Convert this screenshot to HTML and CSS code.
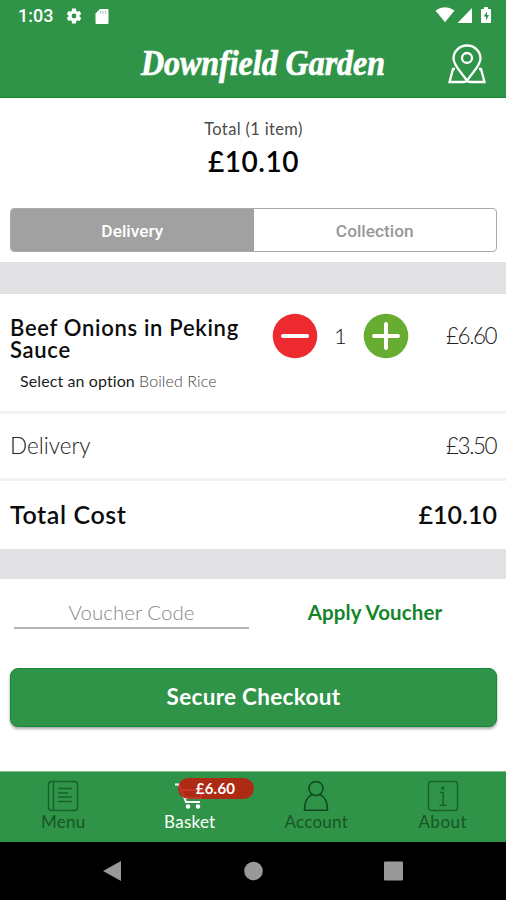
FILE: index.html
```
<!DOCTYPE html>
<html lang="en">
<head>
<meta charset="utf-8">
<title>Downfield Garden</title>
<link rel="stylesheet" href="styles.css">
</head>
<body>
<div class="app">
  <header class="header">
    <div class="status">
      <span class="clock">1:03</span>
      <svg class="gear" width="18" height="18" viewBox="0 0 24 24" fill="#fff"><path d="M19.4 13a7.500 7.500 0 0 0 0-2l2.300-1.800-2.300-4-2.700 1.100a7.500 7.500 0 0 0-1.700-1L14.600 2H9.400L9 5.300a7.500 7.500 0 0 0-1.700 1L4.600 5.200l-2.300 4L4.600 11a7.500 7.500 0 0 0 0 2l-2.300 1.800 2.300 4 2.700-1.100a7.500 7.500 0 0 0 1.700 1l.4 3.300h5.200l.4-3.300a7.500 7.500 0 0 0 1.700-1l2.700 1.100 2.300-4zM12 15.200a3.200 3.200 0 1 1 0-6.400 3.200 3.200 0 0 1 0 6.400z"/></svg>
      <svg class="sd" width="14" height="17" viewBox="0 0 14 17"><path d="M5 1H12.500Q13.500 1 13.500 2V15Q13.500 16 12.500 16H1.500Q.5 16 .5 15V5.500z" fill="#fff"/><path d="M5.500 3v2.500M8 3v2.500M10.500 3v2.500" stroke="#8bc496" stroke-width="1"/></svg>
      <span class="spacer"></span>
      <svg width="58" height="18" viewBox="0 0 58 18" fill="#fff"><path d="M.5 3.500Q10-3 19.500 3.500L10 15.200z"/><path d="M22.500 16H37V1z"/><path d="M49 0h4v2h2q1 0 1 1v12q0 1-1 1h-8q-1 0-1-1V3q0-1 1-1h2z"/><path d="M52 4.500l-3.200 5H51v4l3-5.500h-2z" fill="#2f9447"/></svg>
    </div>
    <div class="brand">
      <svg class="brand-name" width="254" height="54" viewBox="0 0 254 54"><text x="4" y="38" textLength="244" lengthAdjust="spacingAndGlyphs">Downfield Garden</text></svg>
      <svg class="pin" width="40" height="40" viewBox="0 0 40 40" fill="none" stroke="#fff" stroke-width="2.300"><path d="M20 37C16 30 6.500 22 6.500 14.500a13.500 13 0 0 1 27 0C33.500 22 24 30 20 37z"/><circle cx="20" cy="14" r="5"/><path d="M8 25H6L2.500 38H17l3-1 3 1h14.500L34 25h-2"/></svg>
    </div>
  </header>

  <section class="summary">
    <div class="summary-label">Total (1 item)</div>
    <div class="summary-total">£10.10</div>
    <div class="segmented">
      <div class="segment segment-on">Delivery</div>
      <div class="segment">Collection</div>
    </div>
  </section>
  <div class="band band-top"></div>

  <section class="item">
    <div class="item-row">
      <div class="item-name">Beef Onions in Peking Sauce</div>
      <svg class="round" width="46" height="46" viewBox="0 0 46 46"><circle cx="23" cy="23" r="22.300" fill="#ed2a2f"/><path d="M11 23H35" stroke="#fff" stroke-width="4" stroke-linecap="round"/></svg>
      <div class="qty">1</div>
      <svg class="round" width="46" height="46" viewBox="0 0 46 46"><circle cx="23" cy="23" r="22.300" fill="#66ad32"/><path d="M11 23H35M23 11V35" stroke="#fff" stroke-width="4" stroke-linecap="round"/></svg>
      <div class="price item-price">£6.60</div>
    </div>
    <div class="option"><span class="option-name">Select an option</span> <span class="option-value">Boiled Rice</span></div>
  </section>
  <div class="line-row"><span class="line-label">Delivery</span><span class="price">£3.50</span></div>
  <div class="total-row"><span class="total-label">Total Cost</span><span class="total-price">£10.10</span></div>
  <div class="band band-bottom"></div>

  <section class="checkout">
    <div class="voucher">
      <div class="field"><span>Voucher Code</span></div>
      <div class="apply"><span>Apply Voucher</span></div>
    </div>
    <div class="button"><span>Secure Checkout</span></div>
  </section>

  <nav class="tabs">
    <div class="tab">
      <svg width="32" height="32" viewBox="0 0 32 32" fill="none" stroke="#185f2b" stroke-width="1.400"><rect x="1.500" y="1.500" width="29" height="29" rx="3"/><path d="M6.500 1.500v29M11 8.500H25M11 13H21M11 17H25M11 21.500H25"/></svg>
      <span>Menu</span>
    </div>
    <div class="tab tab-on">
      <svg width="32" height="32" viewBox="0 0 32 32" fill="none" stroke="#fff" stroke-width="2"><path d="M1 4.500H5L12 22H26M7.500 10H29L26.500 18H11"/><circle cx="14" cy="26.500" r="1.300" fill="#fff"/><circle cx="24" cy="26.500" r="1.300" fill="#fff"/></svg>
      <span>Basket</span>
      <div class="badge"><span>£6.60</span></div>
    </div>
    <div class="tab">
      <svg width="32" height="32" viewBox="0 0 32 32" fill="none" stroke="#104820" stroke-width="1.600"><circle cx="16" cy="8.500" r="7"/><path d="M12 14.500C7 17 4.500 21 4.500 30.200H27.500C27.500 21 25 17 20 14.500"/></svg>
      <span>Account</span>
    </div>
    <div class="tab">
      <svg width="32" height="32" viewBox="0 0 32 32" fill="none" stroke="#185f2b" stroke-width="1.400"><rect x="1.500" y="1.500" width="29" height="29" rx="2.500"/><path d="M13 12.500h3.200V25M12.500 25.200h7"/><circle cx="15.800" cy="8" r="1" fill="#104820"/></svg>
      <span class="t-about">About</span>
    </div>
  </nav>
  <div class="sysnav">
    <svg width="506" height="58" viewBox="0 0 506 58" fill="#999"><path d="M103 29L121 19V39z"/><circle cx="253.500" cy="29" r="9.300"/><rect x="384" y="19.500" width="19" height="19" rx="1"/></svg>
  </div>
</div>
</body>
</html>
```
FILE: styles.css
```
* { box-sizing: border-box; }
body { margin: 0; background: #fff; font-family: Lato, "Liberation Sans", sans-serif; font-variant-ligatures: none; color: #0c0c0c; }
.app { width: 506px; height: 900px; display: flex; flex-direction: column; overflow: hidden; white-space: nowrap; }
.header { height: 98px; background: #2f9447; border-bottom: 1px solid #148420; }
.status { height: 32px; display: flex; align-items: center; padding: 0 13px 0 18px; }
.clock { width: 47px; font: 500 18px/20px Roboto, sans-serif; color: #fff; }
.sd { margin-left: 12px; }
.spacer { flex: 1; }
.brand { height: 64px; display: flex; align-items: center; padding-left: 137px; }
.brand-name { font: italic bold 35px "Liberation Serif", serif; fill: #fff; stroke: #fff; stroke-width: .7; overflow: visible; }
.pin { margin-left: 56px; }

.summary { height: 164px; padding: 20px 9px 0 10px; display: flex; flex-direction: column; align-items: center; }
.summary-label { font-size: 16.500px; line-height: 23px; letter-spacing: .35px; color: #4a4a4a; }
.summary-total { font-size: 28px; line-height: 34px; margin-top: 3px; font-weight: 600; color: #000; letter-spacing: .5px; }
.segmented { width: 487px; height: 44px; margin-top: 30px; display: flex; border: 1px solid #aaa; border-radius: 4px; overflow: hidden; }
.segment { flex: 1; text-align: center; font: 500 17.300px/44px Roboto, sans-serif; color: #989898; }
.segment-on { background: #a1a1a1; color: #fff; }
.band { background: #e1e1e3; }
.band-top { height: 32px; }
.band-bottom { height: 30px; }

.item { height: 120px; border-bottom: 3px solid #f1f1f1; }
.item-row { display: flex; padding: 19px 9px 0 10px; }
.item-name { width: 262px; padding-top: 4px; padding-right: 20px; white-space: normal; font-size: 22px; line-height: 22px; font-weight: 600; letter-spacing: .7px; }
.qty { width: 45px; text-align: center; font-size: 22px; line-height: 46px; font-weight: 300; }
.price { font-size: 22.500px; font-weight: 300; color: #222; letter-spacing: -1.500px; margin-right: 1px; }
.item-price { flex: 1; text-align: right; line-height: 46px; }
.option { margin-top: 7px; padding-left: 20px; font-size: 16px; line-height: 26px; letter-spacing: .1px; }
.option-name { color: #1c1c1c; }
.option-value { color: #444; font-weight: 300; }
.line-row { height: 67px; border-bottom: 3px solid #f1f1f1; display: flex; justify-content: space-between; padding: 0 9px 0 10px; line-height: 64px; }
.line-label { font-size: 22.500px; font-weight: 300; color: #222; }
.total-row { height: 68px; display: flex; justify-content: space-between; padding: 0 9px 0 10px; font-size: 25px; line-height: 66px; font-weight: 600; }
.total-label { letter-spacing: .6px; }

.checkout { height: 192px; padding: 17px 9px 0 10px; }
.voucher { display: flex; height: 33px; }
.field { width: 235px; margin-left: 4px; border-bottom: 2px solid #b5b5b5; text-align: center; font-size: 20.500px; line-height: 33px; font-weight: 300; color: #888; }
.apply { flex: 1; padding-left: 4px; text-align: center; font-size: 20.500px; line-height: 33px; font-weight: 700; letter-spacing: .1px; color: #15842a; }
.button { height: 59px; margin-top: 39px; background: #2f9447; border: 1px solid #148a38; border-radius: 8px; box-shadow: 0 2px 3px rgba(0,0,0,.35); text-align: center; color: #fff; font-size: 22.500px; line-height: 56px; font-weight: 700; letter-spacing: .3px; }

.tabs { height: 71px; background: #2f9447; display: flex; border-top: 1px solid #7fb98a; }
.tab { position: relative; flex: 1; display: flex; flex-direction: column; align-items: center; padding-top: 8px; font-size: 17px; line-height: 20px; letter-spacing: .25px; color: #185426; }
.t-about { letter-spacing: .5px; }
.tab-on { color: #fff; }
.badge { position: absolute; left: 51px; top: 6px; width: 76px; height: 21px; border-radius: 11px; background: rgba(187,31,15,.9); color: #fff; font-size: 15px; line-height: 21px; font-weight: 700; text-align: center; }
.sysnav { flex: 1; background: #000; }
.sysnav svg { display: block; }
```
